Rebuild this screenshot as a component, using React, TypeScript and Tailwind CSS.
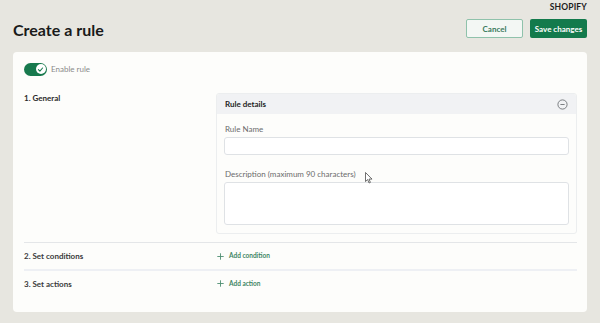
import React from 'react';

const font = { fontFamily: 'Lato, "Open Sans", sans-serif' };

const Toggle: React.FC = () => (
  <div className="w-[23px] h-[13px] rounded-full bg-[#17794d] flex items-center justify-end px-[1.5px]">
    <div className="w-[10px] h-[10px] rounded-full bg-white flex items-center justify-center">
      <svg width="7" height="7" viewBox="0 0 8 8">
        <path d="M1.6 4.2 L3.3 5.8 L6.4 2.3" stroke="#17794d" strokeWidth="1.2" fill="none" strokeLinecap="round" strokeLinejoin="round" />
      </svg>
    </div>
  </div>
);

const Plus: React.FC = () => (
  <svg width="7" height="7" viewBox="0 0 7 7" className="shrink-0">
    <path d="M3.5 0.3 V6.7 M0.3 3.5 H6.7" stroke="#4f8f72" strokeWidth="0.9" />
  </svg>
);

export default function App() {
  return (
    <div style={font} className="relative w-[600px] h-[323px] bg-[#e7e6e0] px-[13px] overflow-hidden">
      {/* top brand */}
      <div className="flex justify-end pt-[2px] h-[14px]">
        <span className="text-[8.5px] font-bold text-[#1c1c1c] tracking-[0.02em] leading-[10px]">SHOPIFY</span>
      </div>

      {/* header */}
      <div className="flex items-center justify-between h-[27px] mt-[1px]">
        <h1 className="text-[16px] font-bold text-[#1a1a1a] leading-none pt-[3px]">Create a rule</h1>
        <div className="flex gap-[7px]">
          <button className="w-[57px] h-[19px] rounded-[2px] border border-[#8fc2ab] bg-[#f3f7f4] text-[8px] font-bold text-[#3a7a5c]">
            Cancel
          </button>
          <button className="w-[57px] h-[19px] rounded-[2px] bg-[#137a4c] text-[8px] font-bold text-white">
            Save changes
          </button>
        </div>
      </div>

      {/* card */}
      <div className="mt-[10px] h-[260px] rounded-[4px] bg-[#fdfdfb] pl-[11px] pr-[10px] pt-[11px]">
        <div className="flex items-center gap-[4px] h-[12px]">
          <Toggle />
          <span className="text-[8px] text-[#8a8a8a]">Enable rule</span>
        </div>

        {/* general */}
        <div className="flex mt-[18px]">
          <div className="w-[192px] text-[8px] font-bold text-[#2a2a2a] leading-[10px]">1. General</div>
          <div className="flex-1 h-[141px] rounded-[3px] border border-[#eceeef] overflow-hidden">
            <div className="h-[20px] bg-[#f1f2f4] flex items-center justify-between pl-[8px] pr-[8px]">
              <span className="text-[8px] font-bold text-[#1f1f1f]">Rule details</span>
              <svg width="11" height="11" viewBox="0 0 11 11">
                <circle cx="5.5" cy="5.5" r="4.6" stroke="#5e6266" strokeWidth="0.8" fill="none" />
                <path d="M3.4 5.5 H7.6" stroke="#5e6266" strokeWidth="0.8" />
              </svg>
            </div>
            <div className="px-[7px] pt-[10px]">
              <div className="pl-[1px] text-[8px] text-[#6b6b6b] leading-[10px]">Rule Name</div>
              <div className="mt-[3px] h-[18px] rounded-[3px] border border-[#dfe2e5] bg-white" />
              <div className="mt-[14px] pl-[1px] text-[8px] text-[#6b6b6b] leading-[10px]">Description (maximum 90 characters)</div>
              <div className="mt-[3px] h-[43px] rounded-[3px] border border-[#dfe2e5] bg-white" />
            </div>
          </div>
        </div>

        {/* conditions */}
        <div className="mt-[8px] border-t border-[#e4e6e8] h-[27px] flex items-center">
          <div className="w-[192px] text-[8px] font-bold text-[#3a3a3a]">2. Set conditions</div>
          <div className="flex items-center gap-[5px] pl-[1px]">
            <Plus />
            <span className="text-[6.5px] font-bold text-[#3f8564]">Add condition</span>
          </div>
        </div>

        {/* actions */}
        <div className="border-t-2 border-[#eef0f4] h-[27px] flex items-center">
          <div className="w-[192px] text-[8px] font-bold text-[#3a3a3a]">3. Set actions</div>
          <div className="flex items-center gap-[5px] pl-[1px]">
            <Plus />
            <span className="text-[6.5px] font-bold text-[#3f8564]">Add action</span>
          </div>
        </div>
      </div>

      {/* mouse cursor */}
      <svg className="absolute left-[365px] top-[172px]" width="8" height="12" viewBox="0 0 8 12">
        <path d="M0.5 0.5 L0.5 9.5 L2.6 7.6 L4.1 11 L5.4 10.4 L4 7.1 L7 7.1 Z" fill="#ffffff" stroke="#333" strokeWidth="0.7" strokeLinejoin="round" />
      </svg>
    </div>
  );
}
